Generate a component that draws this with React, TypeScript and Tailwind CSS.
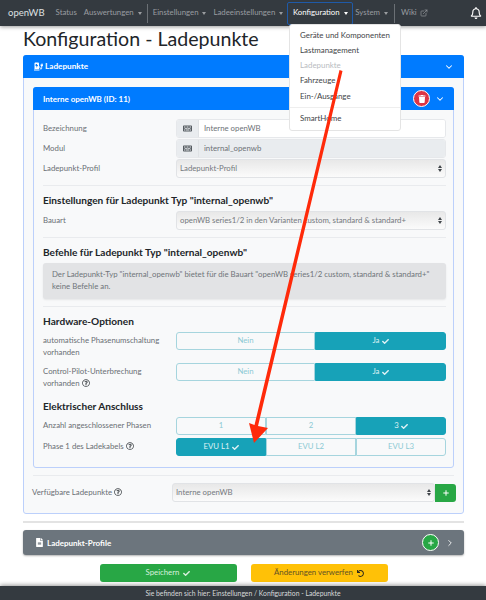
import { ChevronDown, ChevronRight, ExternalLink, Plus } from "lucide-react";
import { FaChargingStation, FaCheck, FaFileAlt, FaKeyboard, FaRegBell, FaRegQuestionCircle, FaTrash, FaUndo } from "react-icons/fa";

const font = "font-['Lato','Noto_Sans',sans-serif]";

function NavItem({ label, caret, active }: { label: string; caret?: boolean; active?: boolean }) {
  return (
    <span className={`flex items-center gap-[4px] text-[7.8px] ${active ? "text-white" : "text-[#9a9da0]"}`}>
      {label}
      {caret && <span className="mt-px h-0 w-0 border-x-[2.5px] border-t-[3px] border-x-transparent border-t-current" />}
    </span>
  );
}

function Label({ children }: { children: React.ReactNode }) {
  return <div className="w-[133px] shrink-0 text-[7.8px] leading-[11.5px] text-[#6a6f74]">{children}</div>;
}

function Help() {
  return <FaRegQuestionCircle className="inline size-[8px] align-[-1px] text-[#45494d]" />;
}

function InputRow({ label, value, disabled }: { label: string; value: string; disabled?: boolean }) {
  return (
    <div className="flex h-[19px] items-center">
      <Label>{label}</Label>
      <div className="flex h-[19px] flex-1 overflow-hidden rounded-[3px] border border-[#e6e8eb]">
        <div className="flex w-[22px] items-center justify-center border-r border-[#dfe2e5] bg-[#e9ecef]">
          <FaKeyboard className="size-[9px] text-[#555b61]" />
        </div>
        <div className={`flex flex-1 items-center px-[5px] text-[7.8px] text-[#6d7277] ${disabled ? "bg-[#e9ecef]" : "bg-white"}`}>
          {value}
        </div>
      </div>
    </div>
  );
}

function Select({ value }: { value: string }) {
  return (
    <div className="flex h-[19px] flex-1 items-center justify-between rounded-[3px] border border-[#e1e3e6] bg-gradient-to-b from-[#e8e8e8] to-[#fbfbfb] pl-[3px] pr-[3px] text-[7.8px] text-[#75797e]">
      {value}
      <span className="flex flex-col gap-px">
        <span className="h-0 w-0 border-x-[2px] border-b-[3px] border-x-transparent border-b-[#40454a]" />
        <span className="h-0 w-0 border-x-[2px] border-t-[3px] border-x-transparent border-t-[#40454a]" />
      </span>
    </div>
  );
}

function Toggle({ items, widths }: { items: { label: string; active?: boolean }[]; widths: string[] }) {
  return (
    <div className="flex h-[18px] flex-1">
      {items.map((item, i) => (
        <div
          key={item.label}
          className={`flex items-center justify-center gap-[2px] border text-[7.8px] first:rounded-l-[3px] last:rounded-r-[3px] ${widths[i]} ${
            item.active ? "border-[#17a2b8] bg-[#17a2b8] text-[#dff2f5]" : "border-[#a6d5de] text-[#8cc9d4]"
          }`}
        >
          {item.label}
          {item.active && <FaCheck className="size-[7px]" />}
        </div>
      ))}
    </div>
  );
}

function Divider() {
  return <div className="h-px bg-[#e9ebee]" />;
}

function Heading({ children }: { children: React.ReactNode }) {
  return <div className="text-[10.1px] font-bold leading-[11px] text-[#212529]">{children}</div>;
}

export default function App() {
  return (
    <div className={`relative h-[600px] w-[486px] overflow-hidden bg-white ${font}`}>
      {/* navbar */}
      <nav className="flex h-[26px] items-center bg-[#343a40] pl-2 shadow-[0_1px_4px_rgba(0,0,0,0.4)]">
        <span className="text-[9.5px] text-[#dfe0e1]">openWB</span>
        <div className="ml-[11px] flex items-center gap-[7px]">
          <NavItem label="Status" />
          <NavItem label="Auswertungen" caret />
        </div>
        <div className="mx-[5px] h-[19px] w-px bg-[#6b7075]" />
        <div className="flex items-center gap-[7px]">
          <NavItem label="Einstellungen" caret />
          <NavItem label="Ladeeinstellungen" caret />
        </div>
        <div className="ml-[4px] flex h-[23px] w-[66px] items-center justify-center rounded-[2px] border border-[#1f5aa8]">
          <NavItem label="Konfiguration" caret active />
        </div>
        <div className="ml-[2px]">
          <NavItem label="System" caret />
        </div>
        <div className="mx-[6px] h-[19px] w-px bg-[#6b7075]" />
        <span className="flex items-center gap-[3px] text-[7.8px] text-[#9a9da0]">
          Wiki <ExternalLink className="size-[8px]" />
        </span>
        <FaRegBell className="ml-auto mr-[4px] size-[12px] text-white" />
      </nav>

      <main className="pl-[23px] pr-[22px]">
        <h1 className="text-[19.6px] leading-[26px] text-[#212529]">Konfiguration - Ladepunkte</h1>

        {/* outer card */}
        <section className="mt-[3px] h-[459px] rounded-[3px] border border-[#bcd0fb] bg-[#f8f9fa]">
          <header className="-m-px flex h-[23px] items-center justify-between rounded-t-[3px] bg-[#007bff] pl-[11px] pr-[10px] text-white">
            <span className="flex items-center gap-[2px] text-[8.2px] font-bold">
              <FaChargingStation className="size-[9px]" /> Ladepunkte
            </span>
            <ChevronDown className="size-[10px]" strokeWidth={2.5} />
          </header>

          {/* inner card */}
          <div className="mx-[9px] mt-[10px] h-[381px] rounded-[3px] border border-[#bcd0fb]">
            <header className="-m-px flex h-[23px] items-center justify-between rounded-t-[3px] bg-[#007bff] pl-[10px] pr-[9px] text-white">
              <span className="text-[8px] font-bold">Interne openWB (ID: 11)</span>
              <span className="flex items-center gap-[5px]">
                <span className="flex size-[17px] items-center justify-center rounded-full border border-white bg-[#dc3545]">
                  <FaTrash className="size-[8px]" />
                </span>
                <ChevronDown className="size-[10px]" strokeWidth={2.5} />
              </span>
            </header>

            <div className="flex flex-col pl-[9px] pr-[7px] pt-[10px]">
              <div className="flex flex-col gap-px">
                <InputRow label="Bezeichnung" value="Interne openWB" />
                <InputRow label="Modul" value="internal_openwb" disabled />
                <div className="flex h-[19px] items-center">
                  <Label>Ladepunkt-Profil</Label>
                  <Select value="Ladepunkt-Profil" />
                </div>
              </div>
              <div className="mb-[9px] mt-[7px]">
                <Divider />
              </div>
              <Heading>Einstellungen für Ladepunkt Typ "internal_openwb"</Heading>
              <div className="mt-[5px] flex h-[19px] items-center">
                <Label>Bauart</Label>
                <Select value="openWB series1/2 in den Varianten custom, standard & standard+" />
              </div>
              <div className="mb-[9px] mt-[7px]">
                <Divider />
              </div>
              <Heading>Befehle für Ladepunkt Typ "internal_openwb"</Heading>
              <div className="mt-[5px] h-[36px] rounded-[3px] bg-[#e2e3e5] px-[9px] py-[6px] text-[7.8px] leading-[11.5px] text-[#6f7479] shadow-[0_1px_2px_rgba(0,0,0,0.08)]">
                Der Ladepunkt-Typ "internal_openwb" bietet für die Bauart "openWB series1/2 custom, standard & standard+"
                keine Befehle an.
              </div>
              <div className="mb-[9px] mt-[7px]">
                <Divider />
              </div>
              <Heading>Hardware-Optionen</Heading>
              <div className="mt-[5px] flex flex-col gap-[5px]">
                <div className="flex items-start">
                  <div className="pt-[3px]">
                    <Label>automatische Phasenumschaltung vorhanden</Label>
                  </div>
                  <Toggle items={[{ label: "Nein" }, { label: "Ja", active: true }]} widths={["w-[139px]", "w-[131px]"]} />
                </div>
                <div className="flex items-start">
                  <div className="pt-[3px]">
                    <Label>
                      Control-Pilot-Unterbrechung vorhanden <Help />
                    </Label>
                  </div>
                  <Toggle items={[{ label: "Nein" }, { label: "Ja", active: true }]} widths={["w-[139px]", "w-[131px]"]} />
                </div>
              </div>
              <div className="mt-[12px]">
                <Heading>Elektrischer Anschluss</Heading>
              </div>
              <div className="mt-[5px] flex flex-col gap-[3px]">
                <div className="flex items-center">
                  <Label>Anzahl angeschlossener Phasen</Label>
                  <Toggle
                    items={[{ label: "1" }, { label: "2" }, { label: "3", active: true }]}
                    widths={["w-1/3", "w-1/3", "w-1/3"]}
                  />
                </div>
                <div className="flex items-center">
                  <Label>
                    Phase 1 des Ladekabels <Help />
                  </Label>
                  <Toggle
                    items={[{ label: "EVU L1", active: true }, { label: "EVU L2" }, { label: "EVU L3" }]}
                    widths={["w-1/3", "w-1/3", "w-1/3"]}
                  />
                </div>
              </div>
            </div>
          </div>

          <div className="mx-[9px] mt-[7px]">
            <Divider />
          </div>
          <div className="mt-[7px] flex h-[19px] items-center pl-[8px] pr-[7px]">
            <div className="w-[140px] shrink-0 text-[7.8px] text-[#6a6f74]">
              Verfügbare Ladepunkte <Help />
            </div>
            <Select value="Interne openWB" />
            <span className="flex h-[18px] w-[21px] items-center justify-center rounded-r-[3px] bg-[#28a745] text-white">
              <Plus className="size-[8px]" strokeWidth={3} />
            </span>
          </div>
        </section>

        <div className="mt-[7px] h-[2px] bg-[#e3e3e3]" />

        <section className="mt-[7px] flex h-[25px] items-center justify-between rounded-[3px] bg-[#6c757d] pl-[12px] pr-[9px] text-white shadow-[0_1px_2px_rgba(0,0,0,0.3)]">
          <span className="flex items-center gap-[3px] text-[8px] font-bold">
            <FaFileAlt className="size-[9px]" /> Ladepunkt-Profile
          </span>
          <span className="flex items-center gap-[6px]">
            <span className="flex size-[17px] items-center justify-center rounded-full border border-white bg-[#28a745]">
              <Plus className="size-[8px]" strokeWidth={3} />
            </span>
            <ChevronRight className="size-[10px]" strokeWidth={2} />
          </span>
        </section>

        <div className="mt-[9px] flex justify-center gap-[14px] text-[7.8px]">
          <span className="flex h-[18px] w-[137px] items-center justify-center gap-[4px] rounded-[3px] bg-[#28a745] text-[#d9f0de]">
            Speichern <FaCheck className="size-[7px]" />
          </span>
          <span className="flex h-[18px] w-[137px] items-center justify-center gap-[4px] rounded-[3px] bg-[#ffc107] text-[#5f5126]">
            Änderungen verwerfen <FaUndo className="size-[7px] text-[#2e2a1c]" />
          </span>
        </div>
      </main>

      {/* footer */}
      <footer className="absolute inset-x-0 bottom-0 flex h-[14px] items-center justify-center bg-[#343a40] text-[6.8px] text-[#d8d9da] shadow-[0_-1px_4px_rgba(0,0,0,0.4)]">
        Sie befinden sich hier: Einstellungen / Konfiguration - Ladepunkte
      </footer>

      {/* open dropdown */}
      <div className="absolute left-[289px] top-[24px] flex h-[107px] w-[112px] flex-col rounded-[3px] border border-[#e4e4e4] bg-white pl-[10px] pt-[2.5px] text-[7.9px] leading-[15.3px] text-[#3f4448]">
        <span>Geräte und Komponenten</span>
        <span>Lastmanagement</span>
        <span className="text-[#b9bcbf]">Ladepunkte</span>
        <span>Fahrzeuge</span>
        <span>Ein-/Ausgänge</span>
        <div className="-ml-[10px] my-[3px] h-px bg-[#eeeeee]" />
        <span>SmartHome</span>
      </div>

      {/* red annotation arrow */}
      <svg className="pointer-events-none absolute inset-0" width="486" height="600" viewBox="0 0 486 600">
        <polygon points="339.5,70 342.5,71 258,426 268,428 254,443 249,423 254.5,425" fill="#ff2a0a" />
      </svg>
    </div>
  );
}
